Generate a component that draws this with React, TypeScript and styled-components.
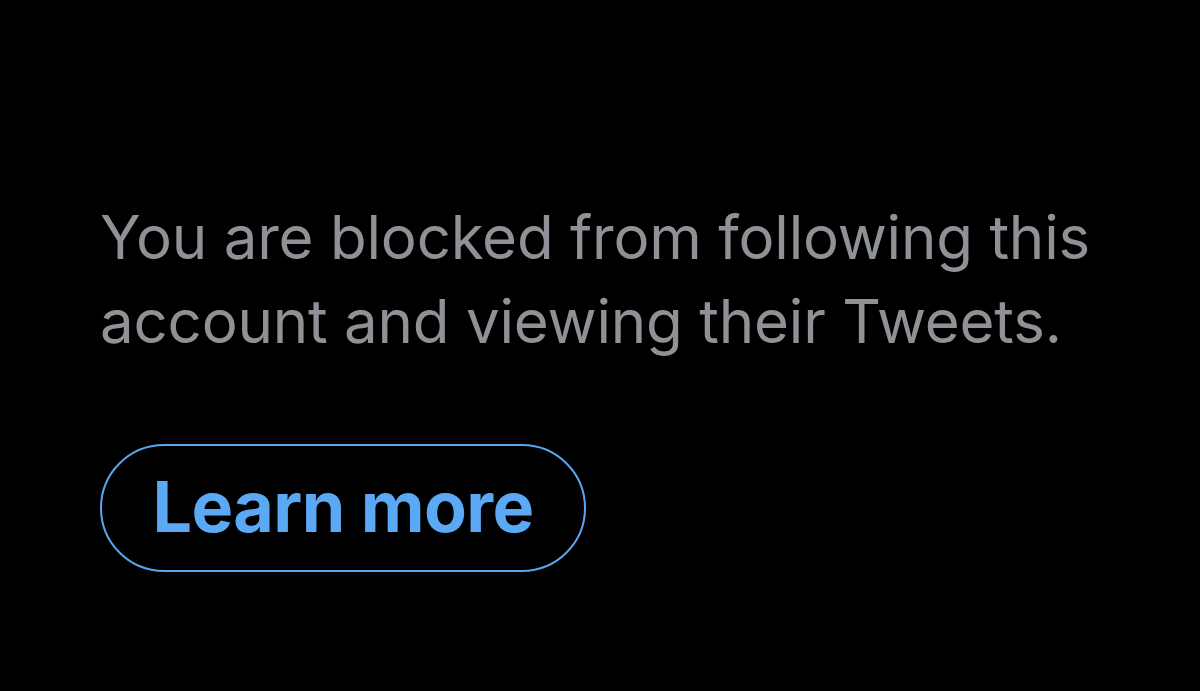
import { createGlobalStyle } from "styled-components";
import styled from "styled-components";

const GlobalStyle = createGlobalStyle`
  html, body {
    margin: 0;
    padding: 0;
    background: #000000;
  }
  body {
    font-family: "Inter", "Liberation Sans", sans-serif;
  }
`;

const Screen = styled.main`
  width: 1200px;
  height: 691px;
  background: #000000;
  box-sizing: border-box;
  padding: 195px 0 0 100px;
  display: flex;
  flex-direction: column;
  align-items: flex-start;
`;

const Message = styled.p`
  margin: 0;
  color: #8e9196;
  font-size: 60px;
  line-height: 84px;
  font-weight: 400;
  letter-spacing: -0.2px;
`;

const OutlineButton = styled.button`
  margin-top: 81px;
  width: 486px;
  height: 128px;
  box-sizing: border-box;
  border: 2px solid #5aa6ee;
  border-radius: 64px;
  background: transparent;
  color: #5ba9f5;
  font-family: "Inter", "Liberation Sans", sans-serif;
  font-size: 70px;
  font-weight: 700;
  letter-spacing: -0.6px;
  display: flex;
  align-items: center;
  justify-content: center;
  padding: 0 0 4px 0;
  cursor: pointer;
`;

export default function App() {
  return (
    <>
      <GlobalStyle />
      <Screen>
        <Message>
          You are blocked from following this
          <br />
          account and viewing their Tweets.
        </Message>
        <OutlineButton>Learn more</OutlineButton>
      </Screen>
    </>
  );
}
